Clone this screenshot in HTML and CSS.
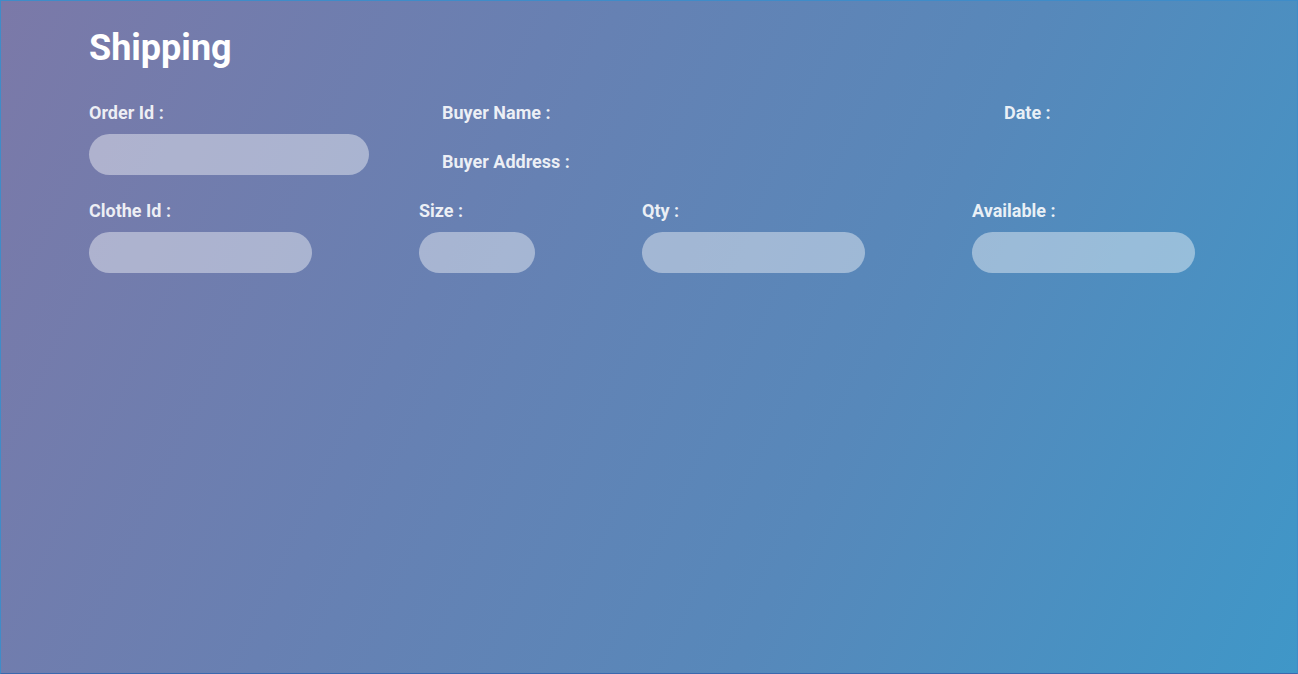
FILE: index.html
```html
<!DOCTYPE html>
<html lang="en">
<head>
<meta charset="utf-8">
<title>Shipping</title>
<link rel="stylesheet" href="styles.css">
</head>
<body>
<main class="page">
  <h1 class="title">Shipping</h1>
  <section class="row row-top">
    <div class="col col-order">
      <label class="label">Order Id :</label>
      <div class="field field-order"></div>
    </div>
    <div class="col col-buyer">
      <label class="label">Buyer Name :</label>
      <label class="label label-address">Buyer Address :</label>
    </div>
    <div class="col col-date">
      <label class="label">Date :</label>
    </div>
  </section>
  <section class="row row-bottom">
    <div class="col">
      <label class="label">Clothe Id :</label>
      <div class="field field-wide"></div>
    </div>
    <div class="col">
      <label class="label">Size :</label>
      <div class="field field-small"></div>
    </div>
    <div class="col">
      <label class="label">Qty :</label>
      <div class="field field-wide"></div>
    </div>
    <div class="col">
      <label class="label">Available :</label>
      <div class="field field-wide"></div>
    </div>
  </section>
</main>
</body>
</html>
```
FILE: styles.css
```css
* { box-sizing: border-box; }
html, body { margin: 0; padding: 0; }
body {
  width: 1298px;
  height: 674px;
  font-family: Roboto, "Liberation Sans", sans-serif;
  overflow: hidden;
}
.page {
  width: 1298px;
  height: 674px;
  border: 1px solid #3f8cc8;
  border-bottom-color: #3b68ae;
  background: linear-gradient(115deg, #7b79a8 0%, #6880b2 35%, #5788ba 65%, #3f97c8 100%);
  padding: 26px 0 0 88px;
}
.title {
  margin: 0;
  font-size: 36px;
  font-weight: 700;
  color: #ffffff;
  line-height: 42px;
}
.row { display: flex; }
.row-top { margin-top: 33px; }
.col { display: flex; flex-direction: column; }
.col-order { width: 353px; }
.col-buyer { width: 562px; }
.label {
  font-size: 18px;
  font-weight: 700;
  line-height: 21px;
  color: rgba(255, 255, 255, 0.88);
}
.label-address { margin-top: 28px; }
.field {
  height: 41px;
  border-radius: 21px;
  background: rgba(255, 255, 255, 0.42);
  margin-top: 11px;
}
.field-order { width: 280px; }
.field-wide { width: 223px; }
.field-small { width: 116px; }
.row-bottom { margin-top: 25px; gap: 107px; }
```
